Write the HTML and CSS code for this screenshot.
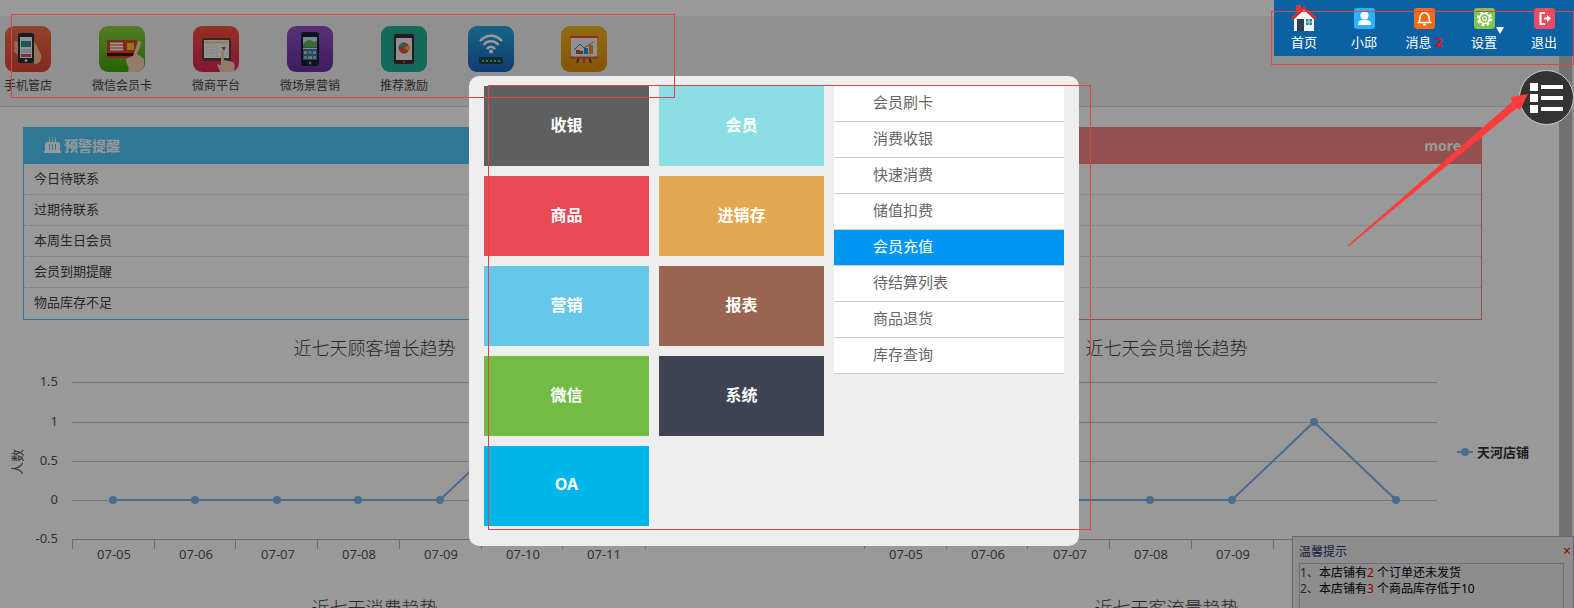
FILE: index.html
```
<!DOCTYPE html>
<html lang="zh-CN">
<head>
  <meta charset="UTF-8">
  <title>会员管理系统</title>
  <link rel="stylesheet" href="styles.css">
</head>
<body>

  <div class="page">
    <main class="content">
      <nav class="apps">
        <a class="app" href="#">
          <svg class="app-icon" viewBox="0 0 46 46">
            <defs><linearGradient id="g1" x2="0" y2="1"><stop offset="0" stop-color="#ee7048"/><stop offset="1" stop-color="#dd4538"/></linearGradient></defs>
            <rect width="46" height="46" rx="9" fill="url(#g1)"/>
            <path d="M10 15l4 2v12l-4-3zM9 20l5 2M9 25l5 2" fill="#f0b58c" stroke="#f0b58c"/>
            <path d="M27 13l5 7 4 9c1 5-2 9-6 9l-5-4z" fill="#f5c197"/>
            <rect x="13" y="7" width="16" height="30" rx="2" fill="#25303c"/>
            <rect x="15" y="11" width="12" height="21" fill="#f4f6f8"/>
            <rect x="16" y="15" width="10" height="6" fill="#32938f"/>
            <path d="M16 24h10M16 26h10" stroke="#9fb5c4"/>
            <rect x="16" y="28" width="10" height="3" fill="#e0477c"/>
            <circle cx="21" cy="34.500" r="1.300" fill="#fff"/>
          </svg>
          <span>手机管店</span>
        </a>
        <a class="app" href="#">
          <svg class="app-icon" viewBox="0 0 46 46">
            <defs><linearGradient id="g2" x2="0" y2="1"><stop offset="0" stop-color="#8fcf3a"/><stop offset="1" stop-color="#43a30f"/></linearGradient></defs>
            <rect width="46" height="46" rx="9" fill="url(#g2)"/>
            <rect x="8" y="14" width="30" height="18" rx="1" fill="#d8452c"/>
            <rect x="8" y="27" width="30" height="3" fill="#4a0d10"/>
            <path d="M11 17.500h13M11 20.500h13M11 23.500h13" stroke="#fff" stroke-width="1.800"/>
            <rect x="28" y="17" width="7" height="7" fill="#f2c33b"/>
            <path d="M39 15c2-1 4 1 3 3l-4 10 7 5v5c0 4-3 8-8 8h-8c2-5-2-8-2-13l7-3z" fill="#f5d2b3"/>
          </svg>
          <span>微信会员卡</span>
        </a>
        <a class="app" href="#">
          <svg class="app-icon" viewBox="0 0 46 46">
            <defs><linearGradient id="g3" x2="0" y2="1"><stop offset="0" stop-color="#f6503a"/><stop offset="1" stop-color="#dc2457"/></linearGradient></defs>
            <rect width="46" height="46" rx="9" fill="url(#g3)"/>
            <rect x="9" y="12" width="29" height="23" rx="2" fill="#5b4038"/>
            <rect x="11" y="14" width="25" height="18" fill="#f3f3ee"/>
            <path d="M12 16.500h23" stroke="#e5ce8c" stroke-width="2"/>
            <path d="M13 21h10M13 24h10M13 27h10M19 19v12M24 19v12" stroke="#dededa"/>
            <path d="M28 21h5l-2 4z" fill="#e24b55"/>
            <path d="M28 26c0-2 3-2 3 0v8l9 2c2 1 2 6 1 10H27c0-3-3-5-3-8l4 1z" fill="#f5cdb0"/>
          </svg>
          <span>微商平台</span>
        </a>
        <a class="app" href="#">
          <svg class="app-icon" viewBox="0 0 46 46">
            <defs><linearGradient id="g4" x2="0" y2="1"><stop offset="0" stop-color="#9350c2"/><stop offset="1" stop-color="#6a2ea1"/></linearGradient></defs>
            <rect width="46" height="46" rx="9" fill="url(#g4)"/>
            <rect x="14" y="6" width="18" height="34" rx="3" fill="#1c1f2e"/>
            <rect x="16" y="11" width="14" height="23" fill="#3f75b8"/>
            <rect x="16" y="11" width="14" height="7" fill="#c2e1e6"/>
            <path d="M16 18l3-3 4-1 4 2 3-1v6H16z" fill="#5fb348"/>
            <path d="M16 22.500h14" stroke="#d8e6ee"/>
            <path d="M17 26.500h3M26 26.500h3M21 31.500h4" stroke="#e2d858" stroke-width="2.500"/>
            <path d="M21.500 26.500h3M17 31.500h3M26 31.500h3" stroke="#7fc6e8" stroke-width="2.500"/>
            <circle cx="23" cy="37" r="1.500" fill="#8790a8"/>
          </svg>
          <span>微场景营销</span>
        </a>
        <a class="app" href="#">
          <svg class="app-icon" viewBox="0 0 46 46">
            <rect width="46" height="46" rx="9" fill="#1fb095"/>
            <rect x="13" y="8" width="20" height="30" rx="2" fill="#43292f"/>
            <rect x="15" y="12" width="16" height="22" fill="#f3f1f3"/>
            <circle cx="23" cy="22" r="5.500" fill="#e2572e"/>
            <path d="M23 22v-5.500a5.500 5.500 0 0 0-5 4z" fill="#36a59b"/>
            <path d="M23 22l5-3a6 6 0 0 1 0 6z" fill="#ecb63c"/>
            <circle cx="23" cy="36" r="1" fill="#e2572e"/>
          </svg>
          <span>推荐激励</span>
        </a>
        <a class="app app-narrow" href="#" aria-label="WiFi">
          <svg class="app-icon" viewBox="0 0 46 46">
            <defs><linearGradient id="g6" x2="0" y2="1"><stop offset="0" stop-color="#28a8de"/><stop offset="1" stop-color="#1a63bd"/></linearGradient></defs>
            <rect width="46" height="46" rx="9" fill="url(#g6)"/>
            <path d="M12 15c6-7 16-7 22 0M15.500 19c4-5 11-5 15 0M19 23c2-3 6-3 8 0" fill="none" stroke="#fff" stroke-width="2.600"/>
            <circle cx="23" cy="25.500" r="2" fill="#fff"/>
            <rect x="11" y="31" width="24" height="7" rx="1" fill="#23435b"/>
            <path d="M14 35h18" stroke="#68c548" stroke-width="2" stroke-dasharray="2 2"/>
          </svg>
        </a>
        <a class="app app-wide" href="#" aria-label="报表">
          <svg class="app-icon" viewBox="0 0 46 46">
            <defs><linearGradient id="g7" x2="0" y2="1"><stop offset="0" stop-color="#f3b51c"/><stop offset="1" stop-color="#dd8c08"/></linearGradient></defs>
            <rect width="46" height="46" rx="9" fill="url(#g7)"/>
            <path d="M18 31l-2 6M28 31l2 6" stroke="#40302d" stroke-width="1.600"/>
            <path d="M23 32v5" stroke="#d9413b" stroke-width="2"/>
            <rect x="10" y="12" width="26" height="19" fill="#f1f1f1"/>
            <path d="M9 11h28M9 31.500h28" stroke="#df5240" stroke-width="2"/>
            <path d="M15 28v-4h4v4z" fill="#e33f36"/>
            <path d="M19 28v-3h3v3z" fill="#7f55a3"/>
            <path d="M23 28v-6h4v6z" fill="#1f9bd2"/>
            <path d="M28 28v-9h4v9z" fill="#f08b2b"/>
            <path d="M13 24l6-6 4 4 9-6" fill="none" stroke="#6c7580"/>
          </svg>
        </a>
      </nav>

      <section class="alerts">
        <div class="alert alert-blue">
          <h2>
            <svg class="cake" viewBox="0 0 17 16">
              <path d="M5.500 0v5M8.500 0v5M11.500 0v5" stroke="#fff" stroke-dasharray="1 1 3"/>
              <path d="M1 7q0-2 2-2h11q2 0 2 2v7H1zM0 14h17v2H0z" fill="#fff"/>
              <path d="M5.500 7v6M8.500 7v6M11.500 7v6" stroke="#4ec8fa"/>
            </svg>
            <span>预警提醒</span>
          </h2>
          <ul>
            <li>今日待联系</li>
            <li>过期待联系</li>
            <li>本周生日会员</li>
            <li>会员到期提醒</li>
            <li>物品库存不足</li>
          </ul>
        </div>
        <div class="alert alert-red">
          <h2><a class="more" href="#">more</a></h2>
          <ul>
            <li></li>
            <li></li>
            <li></li>
            <li></li>
            <li></li>
          </ul>
        </div>
      </section>

      <section class="charts">
        <div class="chart">
          <h3>近七天顾客增长趋势</h3>
          <svg viewBox="0 0 767 224">
            <path class="grid" d="M72 16.500h573M72 56.500h573M72 95.500h573M72 134.500h573"/>
            <path class="axis" d="M72 173.500h573M72.500 174v9M154.500 174v9M235.500 174v9M317.500 174v9M399.500 174v9M481.500 174v9M562.500 174v9M645.500 174v9"/>
            <g class="label-y">
              <text x="58" y="20">1.5</text>
              <text x="58" y="60">1</text>
              <text x="58" y="99">0.5</text>
              <text x="58" y="138">0</text>
              <text x="58" y="177">-0.5</text>
            </g>
            <g class="label-x">
              <text x="114" y="193">07-05</text>
              <text x="196" y="193">07-06</text>
              <text x="278" y="193">07-07</text>
              <text x="359" y="193">07-08</text>
              <text x="441" y="193">07-09</text>
              <text x="523" y="193">07-10</text>
              <text x="604" y="193">07-11</text>
              <text transform="translate(22 96) rotate(-90)">人数</text>
            </g>
            <polyline class="line" points="113,134 195,134 277,134 358,134 440,134 522,56 604,134"/>
            <g class="dots">
              <circle cx="113" cy="134" r="4"/>
              <circle cx="195" cy="134" r="4"/>
              <circle cx="277" cy="134" r="4"/>
              <circle cx="358" cy="134" r="4"/>
              <circle cx="440" cy="134" r="4"/>
            </g>
          </svg>
        </div>
        <div class="chart">
          <h3>近七天会员增长趋势</h3>
          <svg viewBox="0 0 767 224">
            <path class="grid" d="M72 16.500h573M72 56.500h573M72 95.500h573M72 134.500h573"/>
            <path class="axis" d="M72 173.500h573M72.500 174v9M154.500 174v9M235.500 174v9M317.500 174v9M399.500 174v9M481.500 174v9M562.500 174v9M645.500 174v9"/>
            <g class="label-x">
              <text x="114" y="193">07-05</text>
              <text x="196" y="193">07-06</text>
              <text x="278" y="193">07-07</text>
              <text x="359" y="193">07-08</text>
              <text x="441" y="193">07-09</text>
            </g>
            <polyline class="line" points="113,134 195,134 277,134 358,134 440,134 522,56 604,134"/>
            <g class="dots">
              <circle cx="113" cy="134" r="4"/>
              <circle cx="195" cy="134" r="4"/>
              <circle cx="277" cy="134" r="4"/>
              <circle cx="358" cy="134" r="4"/>
              <circle cx="440" cy="134" r="4"/>
              <circle cx="522" cy="56" r="4"/>
              <circle cx="604" cy="134" r="4"/>
              <circle cx="673" cy="86" r="4"/>
            </g>
            <path class="line" d="M665 86h16"/>
            <text class="legend" x="685" y="91">天河店铺</text>
          </svg>
        </div>
        <div class="chart">
          <h3>近七天消费趋势</h3>
        </div>
        <div class="chart">
          <h3>近七天客流量趋势</h3>
        </div>
      </section>
    </main>
    <div class="scrollbar"></div>
  </div>

  <div class="notice">
    <div class="notice-head">
      <span>温馨提示</span>
      <button type="button" aria-label="关闭">×</button>
    </div>
    <div class="notice-body">
      <p>1、<b>本店铺有</b><em>2</em> <b>个订单还未发货</b></p>
      <p>2、<b>本店铺有</b><em>3</em> <b>个商品库存低于10</b></p>
    </div>
  </div>

  <div class="mask"></div>

  <header class="topbar">
    <a href="#">
      <svg class="home" viewBox="0 0 26 26">
        <path d="M5 0h5v7H5z" fill="#d93a35"/>
        <path d="M3 14L13 4l10 10v12H3z" fill="#f4f4f2"/>
        <path d="M1 14L13 3l12 11" fill="none" stroke="#cf2f32" stroke-width="3"/>
        <path d="M6 14h7v12H6z" fill="#2f3e50"/>
        <path d="M15 14h6v6h-6z" fill="#1d8792"/>
        <path d="M18 14v6M15 17h6" stroke="#b7dce0"/>
      </svg>
      <span>首页</span>
    </a>
    <a href="#">
      <svg viewBox="0 0 21 21">
        <rect width="21" height="21" rx="3" fill="#2eb0fa"/>
        <circle cx="10.500" cy="7.500" r="4" fill="#fff"/>
        <path d="M4 17c0-5 3-5 6.500-5S17 12 17 17z" fill="#fff"/>
      </svg>
      <span>小邱</span>
    </a>
    <a href="#">
      <svg viewBox="0 0 21 21">
        <rect width="21" height="21" rx="3" fill="#fa6a12"/>
        <path d="M4.500 14.500h12c-2-2-1-5-2-7-2-4-6-4-8 0-1 2 0 5-2 7z" fill="none" stroke="#fff" stroke-width="1.600"/>
        <path d="M9 16.500h3M10.500 3v2" stroke="#fff" stroke-width="2"/>
      </svg>
      <span>消息 <strong>2</strong></span>
    </a>
    <a class="settings" href="#">
      <svg viewBox="0 0 21 21">
        <rect width="21" height="21" rx="3" fill="#82c453"/>
        <circle cx="10.500" cy="10.500" r="6.500" fill="none" stroke="#fff" stroke-width="2.500" stroke-dasharray="2.600 2.500"/>
        <circle cx="10.500" cy="10.500" r="5" fill="none" stroke="#fff" stroke-width="1.600"/>
        <circle cx="10.500" cy="10.500" r="2" fill="none" stroke="#fff" stroke-width="1.200"/>
      </svg>
      <span>设置</span>
    </a>
    <a href="#">
      <svg viewBox="0 0 21 21">
        <rect width="21" height="21" rx="3" fill="#ea4b60"/>
        <path d="M11 5H6.500v11H11M10 10.500h5" fill="none" stroke="#fff" stroke-width="2"/>
        <path d="M13 7l4 3.500-4 3.500z" fill="#fff"/>
      </svg>
      <span>退出</span>
    </a>
  </header>

  <button class="menu-btn" type="button" aria-label="菜单">
    <svg viewBox="0 0 34 30">
      <path d="M0 0h8v8H0zM0 11h8v8H0zM0 22h8v8H0zM11 2h22v4H11zM11 13h22v4H11zM11 24h22v4H11z" fill="#fff"/>
    </svg>
  </button>

  <div class="menu">
    <div class="tiles">
      <button type="button" class="cash">收银</button>
      <button type="button" class="member">会员</button>
      <button type="button" class="goods">商品</button>
      <button type="button" class="stock">进销存</button>
      <button type="button" class="sales">营销</button>
      <button type="button" class="report">报表</button>
      <button type="button" class="wechat">微信</button>
      <button type="button" class="system">系统</button>
      <button type="button" class="oa">OA</button>
    </div>
    <ul class="submenu">
      <li><a href="#">会员刷卡</a></li>
      <li><a href="#">消费收银</a></li>
      <li><a href="#">快速消费</a></li>
      <li><a href="#">储值扣费</a></li>
      <li><a class="active" href="#">会员充值</a></li>
      <li><a href="#">待结算列表</a></li>
      <li><a href="#">商品退货</a></li>
      <li><a href="#">库存查询</a></li>
    </ul>
  </div>

  <!-- 标注 -->
  <div class="mark mark-apps"></div>
  <div class="mark mark-topbar"></div>
  <div class="mark mark-menu"></div>
  <svg class="arrow" viewBox="0 0 182 154">
    <path d="M0 153L165 9l-1-5L181 1l-8 16-3-2L2 153z" fill="#ff3b3b"/>
  </svg>

</body>
</html>
```

FILE: styles.css
```
* {
  box-sizing: border-box;
}

body {
  margin: 0;
  height: 100vh;
  overflow: hidden;
  position: relative;
  font-family: "Noto Sans", "Noto Sans CJK SC", sans-serif;
  font-size: 13px;
  color: #444;
  background: #fff;
}

a {
  color: inherit;
  text-decoration: none;
}

ul, h2, h3, p {
  margin: 0;
  padding: 0;
  list-style: none;
}

button {
  font-family: inherit;
  border: none;
  padding: 0;
  cursor: pointer;
}

.page {
  display: flex;
  height: 100%;
}

.content {
  flex: 1;
  min-width: 0;
  padding-top: 16px;
}

.scrollbar {
  width: 15px;
  background: #bebebe;
  border-right: 2px solid #eee;
}

/* 顶部应用 */
.apps {
  display: flex;
  padding: 10px 0 8px;
  margin-left: -19px;
  background: #f0f0f0;
  border-bottom: 1px solid #d8d8d8;
}

.app {
  display: flex;
  flex-direction: column;
  align-items: center;
  width: 94px;
  height: 72px;
  font-size: 12px;
  line-height: 28px;
  white-space: nowrap;
}

.app-narrow {
  width: 80px;
}

.app-wide {
  width: 106px;
}

.app-icon {
  flex: none;
  width: 46px;
  height: 46px;
}

/* 提醒 */
.alerts {
  display: grid;
  grid-template-columns: 1fr 1fr;
  gap: 40px;
  padding: 20px 77px 10px 23px;
}

.alert {
  border: 1px solid #4ec8fa;
}

.alert h2 {
  display: flex;
  align-items: center;
  gap: 3px;
  height: 36px;
  padding: 0 20px 2px;
  font-size: 14px;
  color: #fff;
  background: #4ec8fa;
}

.alert-red {
  border-color: #f78484;
}

.alert-red h2 {
  background: #f78484;
}

.cake {
  width: 17px;
  height: 16px;
}

.more {
  margin-left: auto;
}

.alert li {
  height: 31px;
  padding-left: 10px;
  line-height: 28px;
  border-bottom: 1px dotted #ccc;
}

.alert li:last-child {
  border-bottom: none;
}

/* 图表 */
.charts {
  display: grid;
  grid-template-columns: 1fr 1fr;
  column-gap: 25px;
}

.chart h3 {
  padding-right: 18px;
  font-size: 18px;
  font-weight: 300;
  line-height: 36px;
  text-align: center;
}

.chart svg {
  display: block;
  width: 100%;
  font-size: 13px;
  fill: #555;
}

.grid, .axis {
  stroke: #c6c6c6;
}

.axis {
  stroke: #b4b4bc;
}

.label-y {
  text-anchor: end;
}

.label-x {
  text-anchor: middle;
}

.line {
  fill: none;
  stroke: #7cb5ec;
  stroke-width: 2;
}

.dots {
  fill: #7cb5ec;
}

.legend {
  font-weight: bold;
  fill: #333;
}

/* 右下角提示 */
.notice {
  position: absolute;
  right: 0;
  bottom: 0;
  width: 282px;
  height: 72px;
  padding: 0 9px 0 6px;
  font-size: 12px;
  background: #ebebeb;
  border: 1px solid #a9a9c8;
  border-bottom: none;
}

.notice-head {
  display: flex;
  justify-content: space-between;
  height: 26px;
  margin-right: -7px;
  line-height: 30px;
  color: #1f336b;
}

.notice-head button {
  font-size: 14px;
  color: #f00;
  background: none;
}

.notice-body {
  height: 46px;
  padding-top: 1px;
  line-height: 16px;
  border: 1px solid #b9b9d0;
  border-bottom: none;
}

.notice-body b {
  font-weight: normal;
  color: #000;
}

.notice-body em {
  font-style: normal;
  color: #f00;
}

.mask {
  position: absolute;
  inset: 0;
  background: rgba(0, 0, 0, 0.4);
}

/* 右上角导航 */
.topbar {
  position: absolute;
  top: 0;
  right: 0;
  display: flex;
  height: 56px;
  color: #fff;
  background: #0c61a3;
}

.topbar a {
  position: relative;
  display: flex;
  flex-direction: column;
  align-items: center;
  justify-content: flex-end;
  gap: 1px;
  width: 60px;
  padding-bottom: 2px;
  line-height: 24px;
}

.topbar svg {
  width: 21px;
  height: 21px;
}

.topbar .home {
  width: 26px;
  height: 26px;
  margin-bottom: -2px;
}

.topbar strong {
  color: #f00;
}

.settings::after {
  content: "";
  position: absolute;
  top: 27px;
  right: 10px;
  border: 4px solid transparent;
  border-top: 7px solid #fff;
  border-bottom: none;
}

.menu-btn {
  position: absolute;
  top: 70px;
  right: 0;
  display: flex;
  align-items: center;
  justify-content: center;
  width: 55px;
  height: 55px;
  background: #333;
  border: 1px solid #ccc;
  border-radius: 50%;
}

.menu-btn svg {
  width: 34px;
  height: 30px;
}

/* 弹出菜单 */
.menu {
  position: absolute;
  top: 76px;
  left: calc(50% - 318px);
  display: flex;
  gap: 10px;
  width: 610px;
  padding: 10px 15px 20px;
  background: #eee;
  border-radius: 10px;
}

.tiles {
  display: grid;
  grid-template-columns: 165px 165px;
  grid-auto-rows: 80px;
  gap: 10px;
}

.tiles button {
  padding-bottom: 4px;
  font-size: 16px;
  font-weight: bold;
  color: #fff;
}

.cash { background: #5f5f5f; }
.member { background: #8bdee4; }
.goods { background: #e84a55; }
.stock { background: #e3a852; }
.sales { background: #65c8e9; }
.report { background: #996450; }
.wechat { background: #72bc45; }
.system { background: #3e4253; }
.oa { background: #00b6ea; }

.submenu {
  flex: 1;
}

.submenu a {
  display: block;
  height: 36px;
  padding-left: 39px;
  font-size: 15px;
  line-height: 33px;
  color: #666;
  background: #fff;
  border-bottom: 1px solid #ccc;
}

.submenu .active {
  color: #fff;
  background: #0096f2;
}

/* 标注框 */
.mark {
  position: absolute;
  border: 1px solid #e04444;
  pointer-events: none;
}

.mark-apps {
  top: 14px;
  left: 11px;
  width: 664px;
  height: 84px;
}

.mark-topbar {
  top: 11px;
  right: 0;
  width: 303px;
  height: 54px;
}

.mark-menu {
  top: 85px;
  left: calc(50% - 299px);
  width: 603px;
  height: 445px;
}

.arrow {
  position: absolute;
  top: 93px;
  right: 45px;
  width: 182px;
  height: 154px;
}
```
